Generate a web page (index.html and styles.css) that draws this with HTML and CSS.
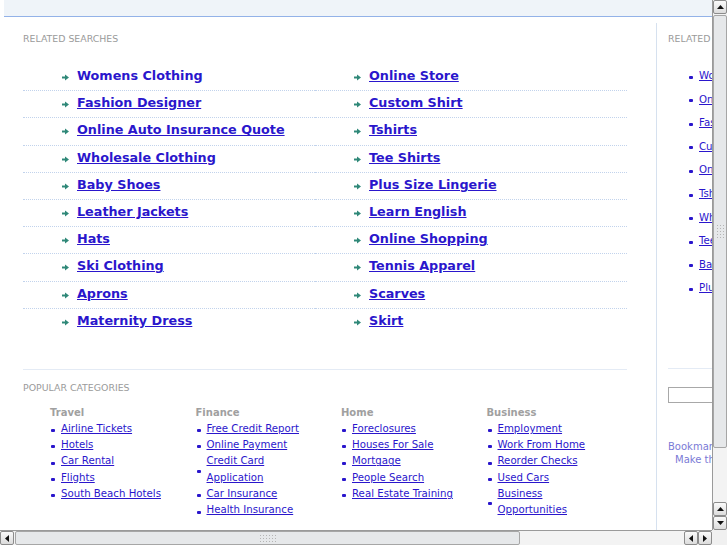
FILE: index.html
```html
<!DOCTYPE html>
<html lang="en">
<head>
    <meta charset="UTF-8">
    <title>Related Searches</title>
    <link rel="stylesheet" href="styles.css">
</head>
<body>
    <div class="page">
        <div class="topbar"></div>
        <div class="wrap">
            <div class="main">
                <h2 class="label">Related Searches</h2>
                <div class="searches">
                    <ul class="col">
                        <li><svg class="arr" width="7" height="7" viewBox="0 0 7 7"><path d="M0 3.5h4" stroke="#2f8878" stroke-width="2"/><path d="M3 0.5l4 3-4 3z" fill="#2f8878"/></svg><a href="#" class="plain">Womens Clothing</a></li>
                        <li><svg class="arr" width="7" height="7" viewBox="0 0 7 7"><path d="M0 3.5h4" stroke="#2f8878" stroke-width="2"/><path d="M3 0.5l4 3-4 3z" fill="#2f8878"/></svg><a href="#">Fashion Designer</a></li>
                        <li><svg class="arr" width="7" height="7" viewBox="0 0 7 7"><path d="M0 3.5h4" stroke="#2f8878" stroke-width="2"/><path d="M3 0.5l4 3-4 3z" fill="#2f8878"/></svg><a href="#">Online Auto Insurance Quote</a></li>
                        <li><svg class="arr" width="7" height="7" viewBox="0 0 7 7"><path d="M0 3.5h4" stroke="#2f8878" stroke-width="2"/><path d="M3 0.5l4 3-4 3z" fill="#2f8878"/></svg><a href="#">Wholesale Clothing</a></li>
                        <li><svg class="arr" width="7" height="7" viewBox="0 0 7 7"><path d="M0 3.5h4" stroke="#2f8878" stroke-width="2"/><path d="M3 0.5l4 3-4 3z" fill="#2f8878"/></svg><a href="#">Baby Shoes</a></li>
                        <li><svg class="arr" width="7" height="7" viewBox="0 0 7 7"><path d="M0 3.5h4" stroke="#2f8878" stroke-width="2"/><path d="M3 0.5l4 3-4 3z" fill="#2f8878"/></svg><a href="#">Leather Jackets</a></li>
                        <li><svg class="arr" width="7" height="7" viewBox="0 0 7 7"><path d="M0 3.5h4" stroke="#2f8878" stroke-width="2"/><path d="M3 0.5l4 3-4 3z" fill="#2f8878"/></svg><a href="#">Hats</a></li>
                        <li><svg class="arr" width="7" height="7" viewBox="0 0 7 7"><path d="M0 3.5h4" stroke="#2f8878" stroke-width="2"/><path d="M3 0.5l4 3-4 3z" fill="#2f8878"/></svg><a href="#">Ski Clothing</a></li>
                        <li><svg class="arr" width="7" height="7" viewBox="0 0 7 7"><path d="M0 3.5h4" stroke="#2f8878" stroke-width="2"/><path d="M3 0.5l4 3-4 3z" fill="#2f8878"/></svg><a href="#">Aprons</a></li>
                        <li><svg class="arr" width="7" height="7" viewBox="0 0 7 7"><path d="M0 3.5h4" stroke="#2f8878" stroke-width="2"/><path d="M3 0.5l4 3-4 3z" fill="#2f8878"/></svg><a href="#">Maternity Dress</a></li>
                    </ul>
                    <ul class="col">
                        <li><svg class="arr" width="7" height="7" viewBox="0 0 7 7"><path d="M0 3.5h4" stroke="#2f8878" stroke-width="2"/><path d="M3 0.5l4 3-4 3z" fill="#2f8878"/></svg><a href="#">Online Store</a></li>
                        <li><svg class="arr" width="7" height="7" viewBox="0 0 7 7"><path d="M0 3.5h4" stroke="#2f8878" stroke-width="2"/><path d="M3 0.5l4 3-4 3z" fill="#2f8878"/></svg><a href="#">Custom Shirt</a></li>
                        <li><svg class="arr" width="7" height="7" viewBox="0 0 7 7"><path d="M0 3.5h4" stroke="#2f8878" stroke-width="2"/><path d="M3 0.5l4 3-4 3z" fill="#2f8878"/></svg><a href="#">Tshirts</a></li>
                        <li><svg class="arr" width="7" height="7" viewBox="0 0 7 7"><path d="M0 3.5h4" stroke="#2f8878" stroke-width="2"/><path d="M3 0.5l4 3-4 3z" fill="#2f8878"/></svg><a href="#">Tee Shirts</a></li>
                        <li><svg class="arr" width="7" height="7" viewBox="0 0 7 7"><path d="M0 3.5h4" stroke="#2f8878" stroke-width="2"/><path d="M3 0.5l4 3-4 3z" fill="#2f8878"/></svg><a href="#">Plus Size Lingerie</a></li>
                        <li><svg class="arr" width="7" height="7" viewBox="0 0 7 7"><path d="M0 3.5h4" stroke="#2f8878" stroke-width="2"/><path d="M3 0.5l4 3-4 3z" fill="#2f8878"/></svg><a href="#">Learn English</a></li>
                        <li><svg class="arr" width="7" height="7" viewBox="0 0 7 7"><path d="M0 3.5h4" stroke="#2f8878" stroke-width="2"/><path d="M3 0.5l4 3-4 3z" fill="#2f8878"/></svg><a href="#">Online Shopping</a></li>
                        <li><svg class="arr" width="7" height="7" viewBox="0 0 7 7"><path d="M0 3.5h4" stroke="#2f8878" stroke-width="2"/><path d="M3 0.5l4 3-4 3z" fill="#2f8878"/></svg><a href="#">Tennis Apparel</a></li>
                        <li><svg class="arr" width="7" height="7" viewBox="0 0 7 7"><path d="M0 3.5h4" stroke="#2f8878" stroke-width="2"/><path d="M3 0.5l4 3-4 3z" fill="#2f8878"/></svg><a href="#">Scarves</a></li>
                        <li><svg class="arr" width="7" height="7" viewBox="0 0 7 7"><path d="M0 3.5h4" stroke="#2f8878" stroke-width="2"/><path d="M3 0.5l4 3-4 3z" fill="#2f8878"/></svg><a href="#">Skirt</a></li>
                    </ul>
                </div>

                <div class="popular">
                    <h2 class="label">Popular Categories</h2>
                    <div class="cats">
                        <div class="cat">
                            <h3>Travel</h3>
                            <ul>
                                <li><a href="#">Airline Tickets</a></li>
                                <li><a href="#">Hotels</a></li>
                                <li><a href="#">Car Rental</a></li>
                                <li><a href="#">Flights</a></li>
                                <li><a href="#">South Beach Hotels</a></li>
                            </ul>
                        </div>
                        <div class="cat">
                            <h3>Finance</h3>
                            <ul>
                                <li><a href="#">Free Credit Report</a></li>
                                <li><a href="#">Online Payment</a></li>
                                <li><a href="#">Credit Card<br>Application</a></li>
                                <li><a href="#">Car Insurance</a></li>
                                <li><a href="#">Health Insurance</a></li>
                            </ul>
                        </div>
                        <div class="cat">
                            <h3>Home</h3>
                            <ul>
                                <li><a href="#">Foreclosures</a></li>
                                <li><a href="#">Houses For Sale</a></li>
                                <li><a href="#">Mortgage</a></li>
                                <li><a href="#">People Search</a></li>
                                <li><a href="#">Real Estate Training</a></li>
                            </ul>
                        </div>
                        <div class="cat">
                            <h3>Business</h3>
                            <ul>
                                <li><a href="#">Employment</a></li>
                                <li><a href="#">Work From Home</a></li>
                                <li><a href="#">Reorder Checks</a></li>
                                <li><a href="#">Used Cars</a></li>
                                <li><a href="#">Business<br>Opportunities</a></li>
                            </ul>
                        </div>
                    </div>
                </div>
            </div>

            <div class="side">
                <h2 class="label">Related Searches</h2>
                <ul class="side-links">
                    <li><a href="#">Womens Clothing</a></li>
                    <li><a href="#">Online Store</a></li>
                    <li><a href="#">Fashion Designer</a></li>
                    <li><a href="#">Custom Shirt</a></li>
                    <li><a href="#">Online Auto Insurance Quote</a></li>
                    <li><a href="#">Tshirts</a></li>
                    <li><a href="#">Wholesale Clothing</a></li>
                    <li><a href="#">Tee Shirts</a></li>
                    <li><a href="#">Baby Shoes</a></li>
                    <li><a href="#">Plus Size Lingerie</a></li>
                </ul>
                <div class="search-box">
                    <input type="text" class="q">
                </div>
                <div class="bookmark">
                    <a href="#">Bookmark this page</a>
                    <a href="#" class="home">Make this your homepage</a>
                </div>
            </div>
        </div>
    </div>

    <!-- fake window scrollbars -->
    <div class="vscroll">
        <div class="sbtn"><svg width="7" height="4" viewBox="0 0 7 4"><path d="M0 4L3.5 0 7 4z" fill="#111"/></svg></div>
        <div class="vthumb"><span class="grip"></span></div>
        <div class="track"></div>
        <div class="sbtn"><svg width="7" height="4" viewBox="0 0 7 4"><path d="M0 4L3.5 0 7 4z" fill="#111"/></svg></div>
        <div class="sbtn"><svg width="7" height="4" viewBox="0 0 7 4"><path d="M0 0L3.5 4 7 0z" fill="#111"/></svg></div>
    </div>
    <div class="hscroll">
        <div class="sbtn"><svg width="4" height="7" viewBox="0 0 4 7"><path d="M4 0L0 3.5 4 7z" fill="#111"/></svg></div>
        <div class="hthumb"><span class="grip"></span></div>
        <div class="track"></div>
        <div class="sbtn"><svg width="4" height="7" viewBox="0 0 4 7"><path d="M4 0L0 3.5 4 7z" fill="#111"/></svg></div>
        <div class="sbtn"><svg width="4" height="7" viewBox="0 0 4 7"><path d="M0 0L4 3.5 0 7z" fill="#111"/></svg></div>
    </div>
    <div class="corner"></div>
</body>
</html>
```

FILE: styles.css
```css
html, body { margin: 0; padding: 0; background: #fff; }
body { width: 727px; height: 545px; overflow: hidden; font-family: "DejaVu Sans", Verdana, sans-serif; }
ul { list-style: none; margin: 0; padding: 0; }
a { color: #2a16cc; }

.page { padding-left: 4px; width: 900px; }
.topbar { height: 16px; background: #eff4f9; border-bottom: 1px solid #93b2e8; }
.wrap { display: flex; margin-top: 6px; height: 520px; }

.main { width: 604px; padding: 10px 29px 0 19px; }
.label { margin: 0; font-size: 9.4px; line-height: 11px; font-weight: normal; text-transform: uppercase; color: #9a9a9a; }

.searches { display: grid; grid-template-columns: 292px 312px; margin-top: 20px; }
.col li { display: flex; align-items: center; gap: 8px; padding: 4px 0 6px 39px; height: 16.2px; line-height: 16.2px; border-bottom: 1px dotted #c2d3ec; }
.col li:last-child { border-bottom-color: transparent; }
.col a { font-size: 12.75px; font-weight: bold; }
.col a.plain { text-decoration: none; }
.arr { flex: none; margin-top: 3px; }

.popular { margin-top: 33px; border-top: 1px solid #e4ebf5; padding-top: 12px; }
.cats { display: grid; grid-template-columns: repeat(4, 145.5px); padding-left: 27px; margin-top: 12px; }
.cat h3 { margin: 0; font-size: 10px; line-height: 16px; color: #a0a0a0; }
.cat li { display: flex; align-items: center; gap: 6px; line-height: 16.3px; font-size: 10.2px; }
.cat li::before, .side-links li::before { content: ""; flex: none; width: 4px; height: 3px; margin: 3px 0 0 1px; border-radius: 1px; background: #2a16cc; }

.side { flex: none; width: 200px; border-left: 1px solid #d6e1ef; padding: 10px 0 0 11px; }
.side-links { margin-top: 20px; padding-left: 20px; }
.side-links li { display: flex; align-items: center; gap: 6px; height: 23.55px; font-size: 10.2px; }
.search-box { margin-top: 69px; border-top: 1px solid #e4ebf5; padding-top: 18px; }
.q { display: block; width: 130px; height: 16px; box-sizing: border-box; border: 1px solid #a8a8a8; padding: 0; margin: 0; }
.bookmark { margin-top: 37px; font-size: 10px; line-height: 13px; }
.bookmark a { display: block; color: #7a7ad6; text-decoration: none; }
.bookmark a.home { padding-left: 7px; }

.vscroll, .hscroll, .corner { position: fixed; box-sizing: border-box; }
.vscroll { left: 712px; top: 0; width: 15px; height: 530px; display: flex; flex-direction: column; background: #f3f3f3; border-left: 1px solid #9a9a9a; }
.hscroll { left: 0; top: 530px; width: 712px; height: 15px; display: flex; background: #f3f3f3; border-top: 1px solid #9a9a9a; }
.corner { left: 712px; top: 530px; width: 15px; height: 15px; background: #f0f0f0; }
.track { flex: 1; background-image: radial-gradient(#dedede 0.6px, transparent 0.7px); background-size: 2px 2px; }
.sbtn { flex: none; width: 14px; height: 14px; display: flex; align-items: center; justify-content: center; box-sizing: border-box; border: 1px solid #8c8c8c; border-radius: 2px; background: linear-gradient(#fafafa, #dcdcdc); }
.vthumb, .hthumb { flex: none; display: flex; align-items: center; justify-content: center; box-sizing: border-box; border: 1px solid #a6a6a6; border-radius: 2px; background: #e6e8ea; }
.vthumb { height: 433px; margin-top: 1px; }
.hthumb { width: 505px; margin-left: 1px; }
.grip { display: block; background-image: radial-gradient(#b4b4b4 0.6px, transparent 0.8px); background-size: 3px 3px; }
.vthumb .grip { width: 9px; height: 15px; }
.hthumb .grip { width: 18px; height: 9px; }
```
